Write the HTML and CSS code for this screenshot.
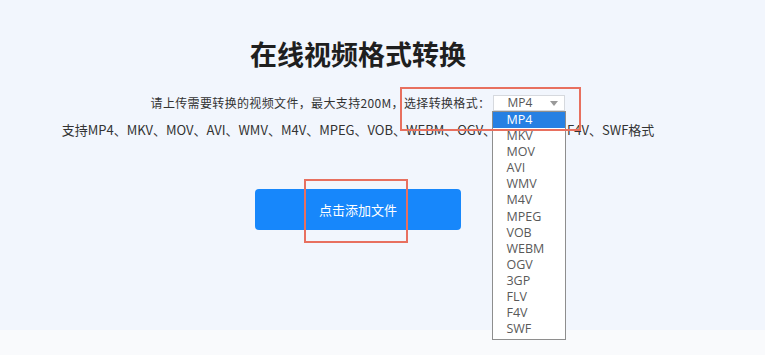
FILE: index.html
```html
<!DOCTYPE html>
<html lang="zh-CN">
<head>
    <meta charset="UTF-8">
    <meta name="viewport" content="width=device-width, initial-scale=1.0">
    <title>在线视频格式转换</title>
    <link rel="stylesheet" href="styles.css">
</head>
<body>

<main class="page">
    <section class="converter">
        <h1>在线视频格式转换</h1>
        <div class="upload-tip">
            <span class="tip-text">请上传需要转换的视频文件，最大支持200M，选择转换格式：</span>
            <div class="format-select">
                <div class="select-box">
                    <span>MP4</span>
                    <span class="arrow"></span>
                </div>
                <!-- lista desplegada del select -->
                <ul class="select-list">
                    <li class="active">MP4</li>
                    <li>MKV</li>
                    <li>MOV</li>
                    <li>AVI</li>
                    <li>WMV</li>
                    <li>M4V</li>
                    <li>MPEG</li>
                    <li>VOB</li>
                    <li>WEBM</li>
                    <li>OGV</li>
                    <li>3GP</li>
                    <li>FLV</li>
                    <li>F4V</li>
                    <li>SWF</li>
                </ul>
            </div>
        </div>
        <p class="support">支持MP4、MKV、MOV、AVI、WMV、M4V、MPEG、VOB、WEBM、OGV、3GP、FLV、F4V、SWF格式</p>
        <button class="add-btn">点击添加文件</button>
    </section>

    <!-- marcas rojas de la captura -->
    <div class="mark mark-select"></div>
    <div class="mark mark-button"></div>
</main>

<footer class="bottom-band"></footer>

</body>
</html>
```

FILE: styles.css
```css
body {
    margin: 0;
    padding: 0;
    background-color: #f9fafc;
    font-family: "Noto Sans CJK SC", "Noto Sans", sans-serif;
    color: #333;
}
.page {
    position: relative;
    height: 330px;
    background-color: #f2f6fd;
}
.converter {
    width: 716px;
    padding-top: 36px;
    display: flex;
    flex-direction: column;
    align-items: center;
}
.converter h1 {
    margin: 0;
    font-size: 27px;
    line-height: 36px;
    font-weight: bold;
    color: #1f1f1f;
}
.upload-tip {
    margin-top: 22px;
    display: flex;
    align-items: center;
    height: 18px;
    font-size: 12px;
    line-height: 18px;
}
.tip-text {
    letter-spacing: 0.35px;
}
.format-select {
    position: relative;
    margin-left: 3px;
}
.select-box {
    width: 72px;
    height: 16px;
    box-sizing: border-box;
    border: 1px solid #d6d9de;
    background-color: #fff;
    display: flex;
    align-items: center;
    justify-content: space-between;
    padding: 0 6px 0 13px;
    font-family: "Open Sans", "Noto Sans", sans-serif;
    font-size: 12px;
    color: #555;
}
.arrow {
    width: 0;
    height: 0;
    border-left: 4px solid transparent;
    border-right: 4px solid transparent;
    border-top: 5px solid #999;
}
.select-list {
    position: absolute;
    left: -1px;
    top: 16px;
    width: 74px;
    margin: 0;
    padding: 0 0 2px 0;
    list-style-type: none;
    background-color: #fff;
    border: 1px solid #8e8e8e;
    box-sizing: border-box;
    font-family: "Open Sans", "Noto Sans", sans-serif;
    font-size: 12.5px;
    color: #595959;
    z-index: 2;
}
.select-list li {
    height: 16.1px;
    line-height: 16.1px;
    padding-left: 13px;
}
.select-list li.active {
    background-color: #2680e3;
    color: #fff;
}
.support {
    margin: 9px 0 0 0;
    font-size: 13px;
    line-height: 18px;
}
.add-btn {
    margin-top: 50px;
    width: 206px;
    height: 41px;
    border: none;
    border-radius: 4px;
    background-color: #1787fb;
    color: #fff;
    font-family: "Noto Sans CJK SC", sans-serif;
    font-size: 13px;
    cursor: pointer;
}
.mark {
    position: absolute;
    border: 2px solid #e8705f;
    box-sizing: border-box;
    z-index: 3;
}
.mark-select {
    left: 400px;
    top: 87px;
    width: 181px;
    height: 44px;
}
.mark-button {
    left: 304px;
    top: 179px;
    width: 104px;
    height: 64px;
}
.bottom-band {
    height: 25px;
}
```
